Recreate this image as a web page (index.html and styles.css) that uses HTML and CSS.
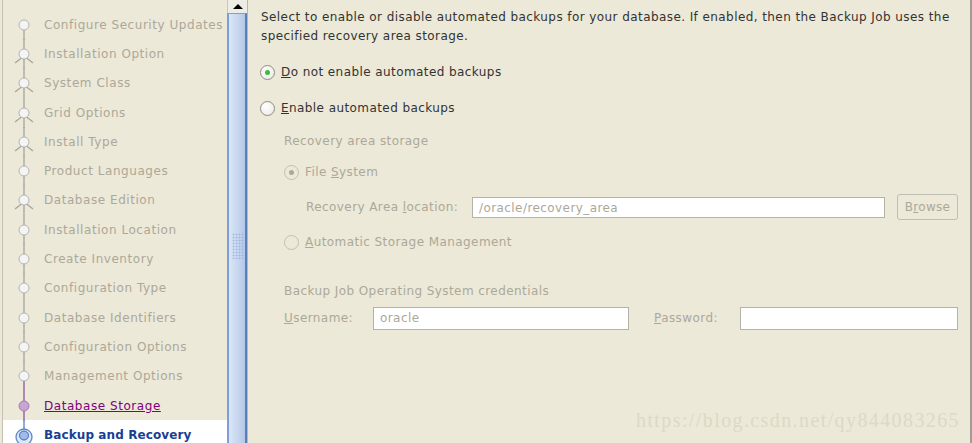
FILE: index.html
```html
<!DOCTYPE html>
<html>
<head>
<meta charset="utf-8">
<link rel="stylesheet" href="styles.css">
</head>
<body>
<div class="window">
  <nav class="steps">
    <ul class="step-list">
      <li class="step"><svg class="node" viewBox="0 0 20 30"><line x1="10" y1="15" x2="10" y2="30" class="rail"/><circle cx="10" cy="15" r="5" class="dot"/></svg><span>Configure Security Updates</span></li>
      <li class="step"><svg class="node" viewBox="0 0 20 30"><line x1="10" y1="0" x2="10" y2="30" class="rail"/><path d="M10 17 L1 24 M10 17 L19 24" class="rail"/><circle cx="10" cy="15" r="5" class="dot"/></svg><span>Installation Option</span></li>
      <li class="step"><svg class="node" viewBox="0 0 20 30"><line x1="10" y1="0" x2="10" y2="30" class="rail"/><path d="M10 17 L1 24 M10 17 L19 24" class="rail"/><circle cx="10" cy="15" r="5" class="dot"/></svg><span>System Class</span></li>
      <li class="step"><svg class="node" viewBox="0 0 20 30"><line x1="10" y1="0" x2="10" y2="30" class="rail"/><path d="M10 17 L1 24 M10 17 L19 24" class="rail"/><circle cx="10" cy="15" r="5" class="dot"/></svg><span>Grid Options</span></li>
      <li class="step"><svg class="node" viewBox="0 0 20 30"><line x1="10" y1="0" x2="10" y2="30" class="rail"/><path d="M10 17 L1 24 M10 17 L19 24" class="rail"/><circle cx="10" cy="15" r="5" class="dot"/></svg><span>Install Type</span></li>
      <li class="step"><svg class="node" viewBox="0 0 20 30"><line x1="10" y1="0" x2="10" y2="30" class="rail"/><circle cx="10" cy="15" r="5" class="dot"/></svg><span>Product Languages</span></li>
      <li class="step"><svg class="node" viewBox="0 0 20 30"><line x1="10" y1="0" x2="10" y2="30" class="rail"/><path d="M10 17 L1 24 M10 17 L19 24" class="rail"/><circle cx="10" cy="15" r="5" class="dot"/></svg><span>Database Edition</span></li>
      <li class="step"><svg class="node" viewBox="0 0 20 30"><line x1="10" y1="0" x2="10" y2="30" class="rail"/><circle cx="10" cy="15" r="5" class="dot"/></svg><span>Installation Location</span></li>
      <li class="step"><svg class="node" viewBox="0 0 20 30"><line x1="10" y1="0" x2="10" y2="30" class="rail"/><circle cx="10" cy="15" r="5" class="dot"/></svg><span>Create Inventory</span></li>
      <li class="step"><svg class="node" viewBox="0 0 20 30"><line x1="10" y1="0" x2="10" y2="30" class="rail"/><circle cx="10" cy="15" r="5" class="dot"/></svg><span>Configuration Type</span></li>
      <li class="step"><svg class="node" viewBox="0 0 20 30"><line x1="10" y1="0" x2="10" y2="30" class="rail"/><circle cx="10" cy="15" r="5" class="dot"/></svg><span>Database Identifiers</span></li>
      <li class="step"><svg class="node" viewBox="0 0 20 30"><line x1="10" y1="0" x2="10" y2="30" class="rail"/><circle cx="10" cy="15" r="5" class="dot"/></svg><span>Configuration Options</span></li>
      <li class="step"><svg class="node" viewBox="0 0 20 30"><line x1="10" y1="0" x2="10" y2="15" class="rail"/><line x1="10" y1="15" x2="10" y2="30" class="rail-visited"/><circle cx="10" cy="15" r="5" class="dot"/></svg><span>Management Options</span></li>
      <li class="step visited"><svg class="node" viewBox="0 0 20 30"><line x1="10" y1="0" x2="10" y2="30" class="rail-visited"/><circle cx="10" cy="15" r="5" class="dot-visited"/></svg><span>Database Storage</span></li>
      <li class="step current"><svg class="node" viewBox="0 0 20 30"><line x1="10" y1="0" x2="10" y2="10" class="rail-current"/><circle cx="10" cy="17" r="8" class="ring"/><circle cx="10" cy="15.5" r="4.5" class="core"/></svg><span>Backup and Recovery</span></li>
    </ul>
  </nav>
  <div class="scrollbar">
    <div class="arrow-btn"><span class="tri"></span></div>
    <div class="thumb"><div class="grip"></div></div>
  </div>
  <main class="content">
    <p class="intro">Select to enable or disable automated backups for your database. If enabled, then the Backup Job uses the specified recovery area storage.</p>
    <div class="option first"><span class="radio on"></span><span><u>D</u>o not enable automated backups</span></div>
    <div class="option"><span class="radio"></span><span><u>E</u>nable automated backups</span></div>
    <div class="sub">
      <div class="section-title">Recovery area storage</div>
      <div class="option dim fs"><span class="radio on dim-radio"></span><span>File <u>S</u>ystem</span></div>
      <div class="loc-row">
        <span class="loc-label">Recovery Area <u>l</u>ocation:</span>
        <span class="field loc-field">/oracle/recovery_area</span>
        <span class="btn">B<u>r</u>owse</span>
      </div>
      <div class="option dim asm"><span class="radio dim-radio"></span><span><u>A</u>utomatic Storage Management</span></div>
      <div class="section-title creds">Backup Job Operating System credentials</div>
      <div class="cred-row">
        <span class="cred-label"><u>U</u>sername:</span>
        <span class="field user-field">oracle</span>
        <span class="cred-label pw"><u>P</u>assword:</span>
        <span class="field pw-field"></span>
      </div>
    </div>
    <div class="watermark">https://blog.csdn.net/qy844083265</div>
  </main>
</div>
</body>
</html>
```
FILE: styles.css
```css
html, body {
  margin: 0;
  padding: 0;
  background: #ece9d8;
}
.window {
  display: flex;
  width: 972px;
  height: 443px;
  overflow: hidden;
  background: #ece9d8;
  font-family: "DejaVu Sans", sans-serif;
  font-size: 12px;
  letter-spacing: 0.42px;
}
.steps {
  width: 224px;
  margin-left: 2px;
  border-left: 1px solid #c5c2b2;
  flex: none;
  overflow: hidden;
}
.step-list {
  list-style: none;
  margin: 0;
  padding: 10px 0 0 0;
}
.step {
  height: 29.3px;
  display: flex;
  align-items: center;
  color: #aca899;
  white-space: nowrap;
  letter-spacing: 0.55px;
}
.node {
  width: 20px;
  height: 30px;
  margin-left: 11px;
  margin-right: 10px;
  flex: none;
}
.rail { stroke: #a7a59c; stroke-width: 1.3; fill: none; }
.rail-visited { stroke: #9a6aa6; stroke-width: 1.5; }
.rail-current { stroke: #6d8fd0; stroke-width: 1.5; }
.dot { fill: #f4f4f4; stroke: #b4b4b4; stroke-width: 1; }
.dot-visited { fill: #c8a4d0; stroke: #a57db2; stroke-width: 1; }
.ring { fill: #dce7f7; stroke: #5e86cc; stroke-width: 1.3; }
.core { fill: #9fbbe9; stroke: #3c67b8; stroke-width: 1; }
.step.visited span {
  color: #800080;
  text-decoration: underline;
}
.step.current {
  background: #ffffff;
}
.step.current span {
  color: #173f94;
  font-weight: bold;
  letter-spacing: 0.1px;
}
.scrollbar {
  width: 20px;
  flex: none;
  display: flex;
  flex-direction: column;
  background: #f0efe7;
}
.arrow-btn {
  height: 13px;
  display: flex;
  align-items: center;
  justify-content: center;
  background: #eeede5;
  border-left: 1px solid #c8c6bb;
}
.tri {
  width: 0;
  height: 0;
  border-left: 5px solid transparent;
  border-right: 5px solid transparent;
  border-bottom: 5px solid #000;
}
.thumb {
  flex: 1;
  border-left: 2px solid #7e9ed8;
  border-right: 2px solid #5b7ec1;
  border-top: 1px solid #7e9ed8;
  background: linear-gradient(to right, #dbe6f7, #c5d5ee 60%, #b3c7e6);
  position: relative;
}
.grip {
  position: absolute;
  left: 3px;
  top: 219px;
  width: 12px;
  height: 26px;
  background-image: radial-gradient(circle, #9bb5e2 0.8px, transparent 1.1px);
  background-size: 3px 3px;
}
.content {
  flex: 1;
  border-left: 1px solid #b9b7aa;
  border-right: 2px solid #9f9d93;
  padding: 8px 0 0 13px;
  position: relative;
  color: #333333;
}
.intro {
  margin: 0;
  line-height: 19px;
  width: 700px;
}
.option {
  display: flex;
  align-items: center;
  height: 20px;
  gap: 6px;
}
.option.first { margin-top: 16px; }
.option + .option { margin-top: 16px; }
.radio {
  width: 13px;
  height: 13px;
  border: 1px solid #8d8c86;
  border-radius: 50%;
  background: radial-gradient(circle at 40% 35%, #ffffff, #e8e7e0);
  position: relative;
  flex: none;
  margin-left: -1px;
}
.radio.on::after {
  content: "";
  position: absolute;
  left: 4px;
  top: 4px;
  width: 5px;
  height: 5px;
  border-radius: 50%;
  background: #3fb83f;
}
.dim { color: #aca899; }
.dim-radio { border-color: #c2c0b5; background: #ece9d8; }
.dim-radio.on::after { background: #aca899; }
.sub {
  margin-left: 23px;
  color: #aca899;
}
.section-title {
  margin-top: 14px;
  height: 18px;
  line-height: 18px;
}
.option.fs { margin-top: 12px; margin-left: 1px; }
.loc-row {
  display: flex;
  align-items: center;
  margin-top: 12px;
  margin-left: 22px;
  height: 26px;
}
.loc-label { width: 166px; }
.field {
  height: 21px;
  line-height: 21px;
  border: 1px solid #b5b3a8;
  background: #ffffff;
  padding-left: 6px;
  box-sizing: border-box;
  color: #aca899;
}
.loc-field { width: 413px; }
.btn {
  margin-left: 12px;
  width: 61px;
  height: 26px;
  line-height: 24px;
  box-sizing: border-box;
  border: 1px solid #c0beb2;
  border-radius: 3px;
  text-align: center;
  color: #aca899;
  letter-spacing: 0.3px;
}
.option.asm { margin-top: 12px; margin-left: 1px; }
.section-title.creds { margin-top: 30px; }
.cred-row {
  display: flex;
  align-items: center;
  margin-top: 6px;
  height: 24px;
}
.cred-label { width: 89px; }
.user-field { width: 256px; height: 23px; }
.cred-label.pw { margin-left: 25px; width: 86px; }
.pw-field { width: 218px; height: 23px; }
.watermark {
  position: absolute;
  right: 10px;
  bottom: 11px;
  font-family: "Liberation Serif", serif;
  font-size: 20px;
  color: #dcd9c7;
  letter-spacing: 1.4px;
}
```
